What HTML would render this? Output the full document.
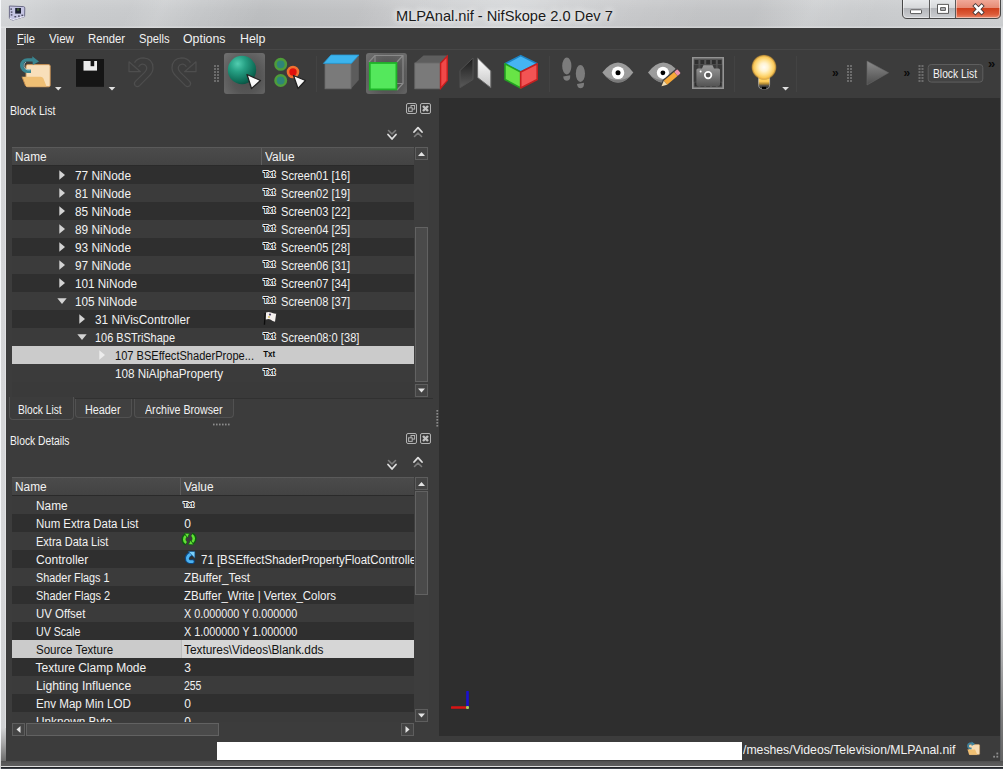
<!DOCTYPE html>
<html><head><meta charset="utf-8"><title>NifSkope</title>
<style>
*{box-sizing:border-box;margin:0;padding:0}
html,body{width:1003px;height:769px;overflow:hidden;background:#d4d6d8}
body{font-family:"Liberation Sans","DejaVu Sans",sans-serif;font-size:12px;color:#eee;position:relative}
.abs{position:absolute}
#frame{left:0;top:0;width:1003px;height:769px;background:linear-gradient(90deg,#d6d8da 0,#cbcdcf 60px,#c4c6c8 260px,#c9cacc 380px,#d2d4d6 500px,#cccdcf 640px,#c9cbcd 850px,#cfd1d3 1003px)}
#tshine{left:0;top:0;width:1003px;height:28px;background:linear-gradient(180deg,rgba(255,255,255,.10) 0,rgba(255,255,255,0) 10px,rgba(0,0,0,.02) 26px,rgba(255,255,255,.2) 27px,rgba(255,255,255,.2) 28px),linear-gradient(115deg,rgba(255,255,255,0) 120px,rgba(255,255,255,.12) 150px,rgba(255,255,255,0) 185px,rgba(0,0,0,.035) 240px,rgba(0,0,0,.035) 330px,rgba(255,255,255,0) 370px,rgba(255,255,255,.1) 480px,rgba(255,255,255,0) 520px,rgba(0,0,0,.04) 640px,rgba(0,0,0,.04) 690px,rgba(255,255,255,.1) 740px,rgba(255,255,255,0) 800px)}
#lb{left:0;top:28px;width:6px;height:741px;background:linear-gradient(180deg,#d2d3d5 0,#d6d7d9 520px,#d0d1d3 700px,#a8a8a8 715px,#6c6c6c 733px,#5a5a5a 741px)}
#lbw{left:0;top:0;width:1px;height:769px;background:linear-gradient(180deg,#f6f8fa 0,#f6f8fa 738px,#d0d0d0 769px)}
#lbh{left:5px;top:28px;width:1px;height:700px;background:rgba(255,255,255,.3)}
#rb{left:1000px;top:28px;width:3px;height:741px;background:linear-gradient(90deg,#5c5e60 0,#5c5e60 1px,#e2e4e6 1px,#dcdee0 3px)}
#rbd{left:1001px;top:570px;width:2px;height:199px;background:linear-gradient(180deg,rgba(100,100,100,0) 0,rgba(100,100,100,.45) 90px,rgba(95,95,95,.8) 150px,rgba(85,85,85,.9) 191px)}
#bb{left:1px;top:761px;width:1002px;height:8px;background:linear-gradient(180deg,#4e4e4e 0,#585858 2px,#5c5c5c 5px,#e4e4e4 5px,#d8d8d8 6px,#1c1c1c 6px,#2a2e34 7px,#50565e 8px)}
#title{left:0;top:6px;width:1003px;text-align:center;font-size:15px;color:#111}
#app{left:6px;top:28px;width:994px;height:733px;background:#3c3c3c}
.mi{position:absolute;top:32px;font-size:12px;color:#f2f2f2;white-space:nowrap}
#tbline{left:6px;top:49px;width:994px;height:1px;background:#474747}
#viewport{left:439px;top:98px;width:561px;height:638px;background:#2e2e2e}
.ptitle{position:absolute;left:10px;font-size:12px;color:#f0f0f0;white-space:nowrap}
.treebg{background:#3a3a3a}
.t{position:absolute;white-space:nowrap;transform-origin:0 0}
.hdr{position:absolute;height:19px;background:linear-gradient(#4b4b4b,#434343);border-top:1px solid #5a5a5a;border-bottom:1px solid #2a2a2a;font-size:12px;color:#f0f0f0}
.hdr span{position:absolute;top:2px;white-space:nowrap}
.row{position:absolute;height:18px}
.row.a{background:#2f2f2f}
.row.b{background:#3b3b3b}
.row.sel{background:#cbcbcb;color:#111}
.row span{position:absolute;top:2px}
.row .arr{position:absolute;top:4px}
.txt{position:absolute;font-style:normal;font-weight:bold;font-size:9px;line-height:9px;color:#111;letter-spacing:-0.5px;text-shadow:-1px 0 #eee,1px 0 #eee,0 -1px #eee,0 1px #eee}
.txt.ns{text-shadow:none}
.txt.sm{font-size:8px;line-height:8px}
.tab{position:absolute;border:1px solid #515151;border-top:none;border-radius:0 0 4px 4px;background:#3c3c3c}
.tab span{position:absolute;top:3px}
.sb{position:absolute;background:#3a3a3a}
.chk{border-radius:3px;background:radial-gradient(ellipse at 55% 60%,#4c4c4c 0,#565656 45%,#686868 80%,#727272 100%)}
.btn13{position:absolute;width:13px;height:13px;border:1px solid #666;background:#444}
</style></head><body>
<div id="frame" class="abs"></div>
<div id="tshine" class="abs"></div><div id="lb" class="abs"></div><div id="lbh" class="abs"></div><div id="rb" class="abs"></div><div id="rbd" class="abs"></div><div id="bb" class="abs"></div><div id="lbw" class="abs"></div>
<span class="t" id="t51" style="left:395.5px;top:5.50px;font-size:15px;line-height:19px;color:#1a1a1a;transform:scaleX(0.9751);text-shadow:0 0 6px #fff,0 0 10px #fff;">MLPAnal.nif - NifSkope 2.0 Dev 7</span>
<div id="app" class="abs"></div>
<span class="t" id="t45" style="left:17px;top:31.84px;font-size:12px;line-height:15px;color:#f2f2f2;transform:scaleX(0.9298);"><u>F</u>ile</span><span class="t" id="t46" style="left:49px;top:31.84px;font-size:12px;line-height:15px;color:#f2f2f2;transform:scaleX(0.9691);">View</span><span class="t" id="t47" style="left:88.3px;top:31.84px;font-size:12px;line-height:15px;color:#f2f2f2;transform:scaleX(0.9401);">Render</span><span class="t" id="t48" style="left:139px;top:31.84px;font-size:12px;line-height:15px;color:#f2f2f2;transform:scaleX(0.9331);">Spells</span><span class="t" id="t49" style="left:183px;top:31.84px;font-size:12px;line-height:15px;color:#f2f2f2;transform:scaleX(1.0276);">Options</span><span class="t" id="t50" style="left:240px;top:31.84px;font-size:12px;line-height:15px;color:#f2f2f2;transform:scaleX(1.0329);">Help</span>
<div id="tbline" class="abs"></div>

<div class="abs chk" style="left:224px;top:53px;width:41px;height:41px"></div>
<div class="abs chk" style="left:366px;top:53px;width:41px;height:41px"></div>
<svg class="abs" style="left:6px;top:50px" width="994" height="48" viewBox="6 50 994 48">
<defs>
<radialGradient id="gSph" cx="0.35" cy="0.28" r="0.8"><stop offset="0" stop-color="#52cdb0"/><stop offset="0.35" stop-color="#26a084"/><stop offset="0.8" stop-color="#0d6a55"/><stop offset="1" stop-color="#084a3c"/></radialGradient>
<linearGradient id="gDk" x1="0" y1="0" x2="0" y2="1"><stop offset="0" stop-color="#1c1c1c"/><stop offset="1" stop-color="#5a5a5a"/></linearGradient>
<linearGradient id="gWh" x1="0" y1="0" x2="0" y2="1"><stop offset="0" stop-color="#ffffff"/><stop offset="1" stop-color="#c4c4c4"/></linearGradient>
<linearGradient id="gPlay" x1="0" y1="0" x2="0" y2="1"><stop offset="0" stop-color="#8c8c8c"/><stop offset="1" stop-color="#4c4c4c"/></linearGradient>
<linearGradient id="gCam" x1="0" y1="0" x2="0" y2="1"><stop offset="0" stop-color="#9a9a9a"/><stop offset="1" stop-color="#555"/></linearGradient>
<radialGradient id="gGlow" cx="0.5" cy="0.5" r="0.5"><stop offset="0" stop-color="#fffcf6"/><stop offset="0.32" stop-color="#fff3d0"/><stop offset="0.58" stop-color="#ffe08c"/><stop offset="0.8" stop-color="#fac858"/><stop offset="0.9" stop-color="#e0a840" stop-opacity="0.8"/><stop offset="1" stop-color="#806020" stop-opacity="0"/></radialGradient>
<linearGradient id="gNeck" x1="0" y1="0" x2="0" y2="1"><stop offset="0" stop-color="#ffe080"/><stop offset="0.5" stop-color="#ffcc58"/><stop offset="0.66" stop-color="#b48c34"/><stop offset="0.8" stop-color="#484848"/><stop offset="1" stop-color="#2a2a2a"/></linearGradient>
</defs>

<g>
<rect x="26" y="64.6" width="24.2" height="22.2" rx="1.6" fill="#f8dfba" stroke="#c98e4e" stroke-width="0.9"/>
<path d="M22 76.8 L40.6 76.8 Q42.6 76.8 43.4 78.6 L46.6 86.6 L27.2 86.6 Q26 86.6 25.5 85.4 Z" fill="#efbf74"/>
<path d="M22 76.8 L25.6 86" stroke="#c98e4e" stroke-width="0.9"/>
<path d="M31 71.3 L27.4 71.3 A5.7 5.7 0 0 1 27.4 59.9 L33 59.9" fill="none" stroke="#3a8590" stroke-width="3.4"/>
<path d="M32.2 56.2 L39 61.6 L32.8 65 Z" fill="#3a8590"/>
<path d="M30.6 69.9 L27.6 69.9 A4.3 4.3 0 0 1 26 62" fill="none" stroke="#b8dce6" stroke-width="0.9" opacity="0.8"/>
</g>
<path d="M55 87 L61.6 87 L58.3 90.4 Z" fill="#e0e0e0"/>

<rect x="76" y="59" width="28" height="27.8" fill="#151515"/>
<rect x="83.5" y="61" width="13.5" height="9.6" fill="#ececec"/>
<rect x="90.6" y="61" width="3.6" height="5.2" fill="#151515"/>
<path d="M108.6 87 L115.3 87 L112 90.4 Z" fill="#e0e0e0"/>

<g fill="none" stroke="#4e4e4e" stroke-width="1.2" stroke-linejoin="round">
<path d="M134.5 62.6 Q137.5 57.8 143.5 57.8 Q153 58.4 153 68 Q153 72.2 149 76.2 L139.6 85.6 Q137.4 87.6 135.2 85.6 Q133.4 83.6 135.4 81.4 L144.6 72.4 Q147.6 69.4 146.4 66.6 Q145 63.8 142 64.2 Q139.8 64.6 138.6 66.8"/>
<path d="M129 61.8 L129 71.7 L140.4 71.7 Z"/>
</g>

<g fill="none" stroke="#4e4e4e" stroke-width="1.2" stroke-linejoin="round" transform="translate(325 0) scale(-1 1)">
<path d="M134.5 62.6 Q137.5 57.8 143.5 57.8 Q153 58.4 153 68 Q153 72.2 149 76.2 L139.6 85.6 Q137.4 87.6 135.2 85.6 Q133.4 83.6 135.4 81.4 L144.6 72.4 Q147.6 69.4 146.4 66.6 Q145 63.8 142 64.2 Q139.8 64.6 138.6 66.8"/>
<path d="M129 61.8 L129 71.7 L140.4 71.7 Z"/>
</g>

<g fill="#6c6c6c">
<rect x="214" y="65" width="2" height="2"/><rect x="217" y="65" width="2" height="2"/>
<rect x="214" y="68" width="2" height="2"/><rect x="217" y="68" width="2" height="2"/>
<rect x="214" y="71" width="2" height="2"/><rect x="217" y="71" width="2" height="2"/>
<rect x="214" y="74" width="2" height="2"/><rect x="217" y="74" width="2" height="2"/>
<rect x="214" y="77" width="2" height="2"/><rect x="217" y="77" width="2" height="2"/>
<rect x="214" y="80" width="2" height="2"/><rect x="217" y="80" width="2" height="2"/>
</g>

<circle cx="242" cy="70" r="14.2" fill="url(#gSph)"/>
<path d="M247 74.5 L260.5 80.5 L251.5 88.5 Z" fill="#fafafa" stroke="#222" stroke-width="1.3" stroke-linejoin="round"/>

<circle cx="280.7" cy="64.3" r="5.2" fill="#2f8478" stroke="#4e9c3a" stroke-width="2.6"/>
<circle cx="280.7" cy="80.5" r="5.2" fill="#2f8478" stroke="#4e9c3a" stroke-width="2.6"/>
<circle cx="293" cy="72" r="5" fill="#e0100c" stroke="#f07030" stroke-width="2.6"/>
<path d="M293.5 75.5 L305.5 80.5 L298 88.5 Z" fill="#fafafa" stroke="#222" stroke-width="1.3" stroke-linejoin="round"/>
<rect x="316" y="56" width="1" height="36" fill="#434343"/>

<path d="M351 63.7 L358.8 55.2 L358.8 80 L351 88.8 Z" fill="#5c5c5c"/>
<rect x="325" y="63.7" width="26" height="25.1" fill="#7a7a7a" stroke="#6a6a6a" stroke-width="0.8"/>
<path d="M323.4 63.4 L331 55 L359 55 L351.4 63.4 Z" fill="#3cb4ee" stroke="#2a98d0" stroke-width="0.8"/>

<path d="M375 62 L375 55.5 L403 55.5 L403 83.5 L397 83.5 M403 55.5 L397 62 M403 83.5 L397 90" fill="none" stroke="#8a8a8a" stroke-width="1.2"/>
<path d="M375 55.5 L369 62" stroke="#8a8a8a" stroke-width="1.2"/>
<rect x="369.8" y="63" width="26.6" height="26.4" fill="#54e85c" stroke="#1eb428" stroke-width="1.8"/>

<path d="M414.8 63 L423.5 55.6 L447.5 55.6 L440 63 Z" fill="#5e5e5e"/>
<rect x="414.8" y="63" width="25.2" height="25.8" fill="#7a7a7a" stroke="#6a6a6a" stroke-width="0.8"/>
<path d="M440.6 63.2 L447.2 56.2 L447.2 80.6 L440.6 88.4 Z" fill="#f24848" stroke="#c81e1e" stroke-width="1.4"/>

<path d="M460 70.5 L473 58 L473 79.5 L460 87.8 Z" fill="url(#gDk)" stroke="#505050" stroke-width="1"/>
<path d="M477.6 58 L490.8 71 L490.8 87.8 L477.6 77.5 Z" fill="url(#gWh)" stroke="#6a6a6a" stroke-width="1"/>

<path d="M520.7 55.6 L537.2 63.8 L520.7 72 L505 63.8 Z" fill="#46b4f2" stroke="#1c84c4" stroke-width="1.6" stroke-linejoin="round"/>
<path d="M505 63.8 L520.7 72 L520.7 88 L505 79.5 Z" fill="#68e446" stroke="#22a222" stroke-width="1.6" stroke-linejoin="round"/>
<path d="M537.2 63.8 L520.7 72 L520.7 88 L537.2 79.5 Z" fill="#f25454" stroke="#c42020" stroke-width="1.6" stroke-linejoin="round"/>
<rect x="549" y="56" width="1" height="36" fill="#434343"/>

<g fill="#7c7c7c">
<ellipse cx="566.8" cy="66" rx="4.6" ry="8.4"/>
<path d="M563.2 76.5 L570.2 75.3 Q570.6 80.5 567 80.8 Q563.6 80.8 563.2 76.5 Z"/>
<ellipse cx="580.4" cy="73.5" rx="4.6" ry="8.4"/>
<path d="M577 84 L584 82.8 Q584.4 88 580.8 88.2 Q577.4 88.2 577 84 Z"/>
</g>

<path d="M602.3 72.6 Q610 62.6 618 62.6 Q626 62.6 633.3 72.6 Q626 82.6 618 82.6 Q610 82.6 602.3 72.6 Z" fill="#9c9c9c"/>
<path d="M605 75.5 Q611 82.6 618 82.6 Q625 82.6 631 75.5 Q625 80 618 80 Q611 80 605 75.5 Z" fill="#7a7a7a"/>
<circle cx="618" cy="72.7" r="6.3" fill="#fff"/><circle cx="618" cy="72.7" r="2.5" fill="#000"/>

<path d="M648 72.6 Q655.6 62.6 663.4 62.6 Q671.4 62.6 678.7 72.6 Q671.4 82.6 663.4 82.6 Q655.6 82.6 648 72.6 Z" fill="#9c9c9c"/>
<path d="M650.5 75.5 Q656.5 82.6 663.4 82.6 Q670 82.6 676 75.5 Q670 80 663.4 80 Q656.5 80 650.5 75.5 Z" fill="#7e7e7e"/>
<circle cx="662.9" cy="72.8" r="6.1" fill="#fff"/><circle cx="662.9" cy="72.8" r="2.4" fill="#000"/>
<g transform="translate(661.5 86.2) rotate(49.4)">
<path d="M-3.9 -24 L3.9 -24 L3.9 -5 L0 1.6 L-3.9 -5 Z" fill="#3c3c3c"/>
<rect x="-2.6" y="-23" width="5.2" height="4.2" rx="0.8" fill="#f090a8"/>
<rect x="-2.6" y="-18.8" width="5.2" height="13.6" fill="#f6a838"/>
<path d="M-2.6 -5.2 L2.6 -5.2 L0 0 Z" fill="#f4dcae"/>
</g>

<rect x="692" y="57" width="32" height="32" fill="#3a3a3a"/>
<g fill="#4e4e4e"><rect x="698.4" y="64" width="2" height="18.4"/><rect x="704.2" y="64" width="2" height="18.4"/><rect x="710" y="64" width="2" height="18.4"/><rect x="715.8" y="64" width="2" height="18.4"/></g>
<rect x="693" y="59" width="30" height="5.6" fill="#565656"/><rect x="693" y="81.8" width="30" height="5.6" fill="#565656"/>
<g fill="#2e2e2e"><rect x="694.6" y="60" width="3.8" height="4"/><rect x="694.6" y="82.4" width="3.8" height="4"/><rect x="700.4" y="60" width="3.8" height="4"/><rect x="700.4" y="82.4" width="3.8" height="4"/><rect x="706.2" y="60" width="3.8" height="4"/><rect x="706.2" y="82.4" width="3.8" height="4"/><rect x="712" y="60" width="3.8" height="4"/><rect x="712" y="82.4" width="3.8" height="4"/><rect x="717.8" y="60" width="3.8" height="4"/><rect x="717.8" y="82.4" width="3.8" height="4"/></g>
<rect x="692.8" y="57.8" width="30.4" height="30.4" fill="none" stroke="#949494" stroke-width="1.6"/>
<path d="M696.4 70 Q696.4 68.4 698 68.4 L702 68.4 L703.4 65.2 L712.6 65.2 L714 68.4 L718.4 68.4 Q720 68.4 720 70 L720 84.4 Q720 86 718.4 86 L698 86 Q696.4 86 696.4 84.4 Z" fill="url(#gCam)"/>
<circle cx="708.1" cy="75.1" r="3.3" fill="#5a5a5a" stroke="#fff" stroke-width="1.7"/>
<circle cx="700.6" cy="71.6" r="1" fill="#fff"/>
<rect x="734" y="56" width="1" height="36" fill="#434343"/>

<path d="M758.6 74 L758.6 84.6 Q758.6 88.8 762 88.8 L766.2 88.8 Q769.6 88.8 769.6 84.6 L769.6 74 Z" fill="url(#gNeck)" stroke="#d8d8d8" stroke-width="0.7" stroke-opacity="0.75"/>
<circle cx="764" cy="67.2" r="13" fill="url(#gGlow)"/>
<rect x="762" y="86.8" width="4.2" height="2.2" fill="#000"/>
<path d="M782.2 87 L789 87 L785.6 90.4 Z" fill="#e0e0e0"/>
<rect x="796" y="56" width="1" height="36" fill="#434343"/>

<text x="832" y="77" font-size="12" font-weight="bold" fill="#0a0a0a" font-family="Liberation Sans, sans-serif">»</text>
<g fill="#6c6c6c" transform="translate(633 0)">
<rect x="214" y="65" width="2" height="2"/><rect x="217" y="65" width="2" height="2"/>
<rect x="214" y="68" width="2" height="2"/><rect x="217" y="68" width="2" height="2"/>
<rect x="214" y="71" width="2" height="2"/><rect x="217" y="71" width="2" height="2"/>
<rect x="214" y="74" width="2" height="2"/><rect x="217" y="74" width="2" height="2"/>
<rect x="214" y="77" width="2" height="2"/><rect x="217" y="77" width="2" height="2"/>
<rect x="214" y="80" width="2" height="2"/><rect x="217" y="80" width="2" height="2"/>
</g>
<path d="M867 61 L888.6 72.8 L867 85 Z" fill="url(#gPlay)" stroke="#666" stroke-width="0.6"/>
<text x="903.6" y="77" font-size="12" font-weight="bold" fill="#0a0a0a" font-family="Liberation Sans, sans-serif">»</text>
<g fill="#6c6c6c" transform="translate(704.5 0)">
<rect x="214" y="65" width="2" height="2"/><rect x="217" y="65" width="2" height="2"/>
<rect x="214" y="68" width="2" height="2"/><rect x="217" y="68" width="2" height="2"/>
<rect x="214" y="71" width="2" height="2"/><rect x="217" y="71" width="2" height="2"/>
<rect x="214" y="74" width="2" height="2"/><rect x="217" y="74" width="2" height="2"/>
<rect x="214" y="77" width="2" height="2"/><rect x="217" y="77" width="2" height="2"/>
<rect x="214" y="80" width="2" height="2"/><rect x="217" y="80" width="2" height="2"/>
</g>
<rect x="928.2" y="64.5" width="54.6" height="17.6" rx="3" fill="#434343" stroke="#5e5e5e" stroke-width="1"/>
<text x="988" y="68" font-size="13" font-weight="bold" fill="#0a0a0a" font-family="Liberation Sans, sans-serif">»</text>
</svg>


<div id="viewport" class="abs"></div>


<div class="abs treebg" style="left:12px;top:147px;width:416px;height:251px"></div>
<div class="hdr" style="left:12px;top:147px;width:402px"><div class="abs" style="left:249px;top:0;width:1px;height:17px;background:#5e5e5e"></div></div>
<div class="row a" style="left:12px;top:166px;width:402px"></div>
<svg class="abs" style="left:59px;top:170px" width="7" height="10" viewBox="0 0 7 10"><path d="M0.3 0.3 L6 5 L0.3 9.7 Z" fill="#d4d4d4"/></svg>
<span class="t" id="t0" style="left:75.3px;top:169.34px;font-size:12px;line-height:15px;color:#f2f2f2;transform:scaleX(0.9876);">77 NiNode</span>
<svg class="abs" style="left:261.8px;top:169px" width="15" height="11" viewBox="0 0 15 11"><text x="1.2" y="8.2" font-family="Liberation Sans, sans-serif" font-weight="bold" font-size="9" textLength="12" lengthAdjust="spacingAndGlyphs" fill="#0a0a0a" stroke="#ececec" stroke-width="2" stroke-linejoin="round" paint-order="stroke">Txt</text></svg>
<span class="t" id="t1" style="left:281.3px;top:169.34px;font-size:12px;line-height:15px;color:#f2f2f2;transform:scaleX(0.9235);">Screen01 [16]</span>
<div class="row b" style="left:12px;top:184px;width:402px"></div>
<svg class="abs" style="left:59px;top:188px" width="7" height="10" viewBox="0 0 7 10"><path d="M0.3 0.3 L6 5 L0.3 9.7 Z" fill="#d4d4d4"/></svg>
<span class="t" id="t2" style="left:75.3px;top:187.34px;font-size:12px;line-height:15px;color:#f2f2f2;transform:scaleX(0.9876);">81 NiNode</span>
<svg class="abs" style="left:261.8px;top:187px" width="15" height="11" viewBox="0 0 15 11"><text x="1.2" y="8.2" font-family="Liberation Sans, sans-serif" font-weight="bold" font-size="9" textLength="12" lengthAdjust="spacingAndGlyphs" fill="#0a0a0a" stroke="#ececec" stroke-width="2" stroke-linejoin="round" paint-order="stroke">Txt</text></svg>
<span class="t" id="t3" style="left:281.3px;top:187.34px;font-size:12px;line-height:15px;color:#f2f2f2;transform:scaleX(0.9235);">Screen02 [19]</span>
<div class="row a" style="left:12px;top:202px;width:402px"></div>
<svg class="abs" style="left:59px;top:206px" width="7" height="10" viewBox="0 0 7 10"><path d="M0.3 0.3 L6 5 L0.3 9.7 Z" fill="#d4d4d4"/></svg>
<span class="t" id="t4" style="left:75.3px;top:205.34px;font-size:12px;line-height:15px;color:#f2f2f2;transform:scaleX(0.9876);">85 NiNode</span>
<svg class="abs" style="left:261.8px;top:205px" width="15" height="11" viewBox="0 0 15 11"><text x="1.2" y="8.2" font-family="Liberation Sans, sans-serif" font-weight="bold" font-size="9" textLength="12" lengthAdjust="spacingAndGlyphs" fill="#0a0a0a" stroke="#ececec" stroke-width="2" stroke-linejoin="round" paint-order="stroke">Txt</text></svg>
<span class="t" id="t5" style="left:281.3px;top:205.34px;font-size:12px;line-height:15px;color:#f2f2f2;transform:scaleX(0.9235);">Screen03 [22]</span>
<div class="row b" style="left:12px;top:220px;width:402px"></div>
<svg class="abs" style="left:59px;top:224px" width="7" height="10" viewBox="0 0 7 10"><path d="M0.3 0.3 L6 5 L0.3 9.7 Z" fill="#d4d4d4"/></svg>
<span class="t" id="t6" style="left:75.3px;top:223.34px;font-size:12px;line-height:15px;color:#f2f2f2;transform:scaleX(0.9876);">89 NiNode</span>
<svg class="abs" style="left:261.8px;top:223px" width="15" height="11" viewBox="0 0 15 11"><text x="1.2" y="8.2" font-family="Liberation Sans, sans-serif" font-weight="bold" font-size="9" textLength="12" lengthAdjust="spacingAndGlyphs" fill="#0a0a0a" stroke="#ececec" stroke-width="2" stroke-linejoin="round" paint-order="stroke">Txt</text></svg>
<span class="t" id="t7" style="left:281.3px;top:223.34px;font-size:12px;line-height:15px;color:#f2f2f2;transform:scaleX(0.9235);">Screen04 [25]</span>
<div class="row a" style="left:12px;top:238px;width:402px"></div>
<svg class="abs" style="left:59px;top:242px" width="7" height="10" viewBox="0 0 7 10"><path d="M0.3 0.3 L6 5 L0.3 9.7 Z" fill="#d4d4d4"/></svg>
<span class="t" id="t8" style="left:75.3px;top:241.34px;font-size:12px;line-height:15px;color:#f2f2f2;transform:scaleX(0.9876);">93 NiNode</span>
<svg class="abs" style="left:261.8px;top:241px" width="15" height="11" viewBox="0 0 15 11"><text x="1.2" y="8.2" font-family="Liberation Sans, sans-serif" font-weight="bold" font-size="9" textLength="12" lengthAdjust="spacingAndGlyphs" fill="#0a0a0a" stroke="#ececec" stroke-width="2" stroke-linejoin="round" paint-order="stroke">Txt</text></svg>
<span class="t" id="t9" style="left:281.3px;top:241.34px;font-size:12px;line-height:15px;color:#f2f2f2;transform:scaleX(0.9235);">Screen05 [28]</span>
<div class="row b" style="left:12px;top:256px;width:402px"></div>
<svg class="abs" style="left:59px;top:260px" width="7" height="10" viewBox="0 0 7 10"><path d="M0.3 0.3 L6 5 L0.3 9.7 Z" fill="#d4d4d4"/></svg>
<span class="t" id="t10" style="left:75.3px;top:259.34px;font-size:12px;line-height:15px;color:#f2f2f2;transform:scaleX(0.9876);">97 NiNode</span>
<svg class="abs" style="left:261.8px;top:259px" width="15" height="11" viewBox="0 0 15 11"><text x="1.2" y="8.2" font-family="Liberation Sans, sans-serif" font-weight="bold" font-size="9" textLength="12" lengthAdjust="spacingAndGlyphs" fill="#0a0a0a" stroke="#ececec" stroke-width="2" stroke-linejoin="round" paint-order="stroke">Txt</text></svg>
<span class="t" id="t11" style="left:281.3px;top:259.34px;font-size:12px;line-height:15px;color:#f2f2f2;transform:scaleX(0.9235);">Screen06 [31]</span>
<div class="row a" style="left:12px;top:274px;width:402px"></div>
<svg class="abs" style="left:59px;top:278px" width="7" height="10" viewBox="0 0 7 10"><path d="M0.3 0.3 L6 5 L0.3 9.7 Z" fill="#d4d4d4"/></svg>
<span class="t" id="t12" style="left:75.3px;top:277.34px;font-size:12px;line-height:15px;color:#f2f2f2;transform:scaleX(0.9783);">101 NiNode</span>
<svg class="abs" style="left:261.8px;top:277px" width="15" height="11" viewBox="0 0 15 11"><text x="1.2" y="8.2" font-family="Liberation Sans, sans-serif" font-weight="bold" font-size="9" textLength="12" lengthAdjust="spacingAndGlyphs" fill="#0a0a0a" stroke="#ececec" stroke-width="2" stroke-linejoin="round" paint-order="stroke">Txt</text></svg>
<span class="t" id="t13" style="left:281.3px;top:277.34px;font-size:12px;line-height:15px;color:#f2f2f2;transform:scaleX(0.9235);">Screen07 [34]</span>
<div class="row b" style="left:12px;top:292px;width:402px"></div>
<svg class="abs" style="left:57px;top:298px" width="10" height="7" viewBox="0 0 10 7"><path d="M0.3 0.3 L9.7 0.3 L5 6 Z" fill="#d4d4d4"/></svg>
<span class="t" id="t14" style="left:75.3px;top:295.34px;font-size:12px;line-height:15px;color:#f2f2f2;transform:scaleX(0.9783);">105 NiNode</span>
<svg class="abs" style="left:261.8px;top:295px" width="15" height="11" viewBox="0 0 15 11"><text x="1.2" y="8.2" font-family="Liberation Sans, sans-serif" font-weight="bold" font-size="9" textLength="12" lengthAdjust="spacingAndGlyphs" fill="#0a0a0a" stroke="#ececec" stroke-width="2" stroke-linejoin="round" paint-order="stroke">Txt</text></svg>
<span class="t" id="t15" style="left:281.3px;top:295.34px;font-size:12px;line-height:15px;color:#f2f2f2;transform:scaleX(0.9235);">Screen08 [37]</span>
<div class="row a" style="left:12px;top:310px;width:402px"></div>
<svg class="abs" style="left:79px;top:314px" width="7" height="10" viewBox="0 0 7 10"><path d="M0.3 0.3 L6 5 L0.3 9.7 Z" fill="#d4d4d4"/></svg>
<span class="t" id="t16" style="left:95.4px;top:313.34px;font-size:12px;line-height:15px;color:#f2f2f2;transform:scaleX(0.9845);">31 NiVisController</span>
<svg class="abs" style="left:262px;top:310px" width="18" height="17" viewBox="262 310 18 17"><path d="M265.3 313 L264.4 324.8" stroke="#0c0c0c" stroke-width="1.3"/><path d="M266 312.6 Q268.5 311.4 271 312.6 Q273.5 313.8 276.2 313.6 L275 321.8 Q272.5 321.4 270.8 319.8 Q268.6 318.2 265.8 319.6 Z" fill="#f4f0ee"/><circle cx="270" cy="314.6" r="1.1" fill="#54486a"/><circle cx="269" cy="317" r="1" fill="#d8c060"/></svg>

<div class="row b" style="left:12px;top:328px;width:402px"></div>
<svg class="abs" style="left:77px;top:334px" width="10" height="7" viewBox="0 0 10 7"><path d="M0.3 0.3 L9.7 0.3 L5 6 Z" fill="#d4d4d4"/></svg>
<span class="t" id="t17" style="left:95.4px;top:331.34px;font-size:12px;line-height:15px;color:#f2f2f2;transform:scaleX(0.9131);">106 BSTriShape</span>
<svg class="abs" style="left:261.8px;top:331px" width="15" height="11" viewBox="0 0 15 11"><text x="1.2" y="8.2" font-family="Liberation Sans, sans-serif" font-weight="bold" font-size="9" textLength="12" lengthAdjust="spacingAndGlyphs" fill="#0a0a0a" stroke="#ececec" stroke-width="2" stroke-linejoin="round" paint-order="stroke">Txt</text></svg>
<span class="t" id="t18" style="left:281.3px;top:331.34px;font-size:12px;line-height:15px;color:#f2f2f2;transform:scaleX(0.9252);">Screen08:0 [38]</span>
<div class="row sel" style="left:12px;top:346px;width:402px"></div>
<svg class="abs" style="left:99px;top:350px" width="7" height="10" viewBox="0 0 7 10"><path d="M0.3 0.3 L6 5 L0.3 9.7 Z" fill="#ececec"/></svg>
<span class="t" id="t19" style="left:115.4px;top:349.34px;font-size:12px;line-height:15px;color:#111;transform:scaleX(0.9233);">107 BSEffectShaderPrope...</span>
<svg class="abs" style="left:261.8px;top:349px" width="15" height="11" viewBox="0 0 15 11"><text x="1.2" y="8.2" font-family="Liberation Sans, sans-serif" font-weight="bold" font-size="9" textLength="12" lengthAdjust="spacingAndGlyphs" fill="#0a0a0a">Txt</text></svg>
<div class="row b" style="left:12px;top:364px;width:402px"></div>
<span class="t" id="t20" style="left:115.4px;top:367.34px;font-size:12px;line-height:15px;color:#f2f2f2;transform:scaleX(0.9753);">108 NiAlphaProperty</span>
<svg class="abs" style="left:261.8px;top:367px" width="15" height="11" viewBox="0 0 15 11"><text x="1.2" y="8.2" font-family="Liberation Sans, sans-serif" font-weight="bold" font-size="9" textLength="12" lengthAdjust="spacingAndGlyphs" fill="#0a0a0a" stroke="#ececec" stroke-width="2" stroke-linejoin="round" paint-order="stroke">Txt</text></svg>

<div class="tab" style="left:9px;top:397px;width:65px;height:23px"></div>
<div class="tab" style="left:75px;top:398px;width:57px;height:20px;background:#404040"></div>
<div class="tab" style="left:134px;top:398px;width:100px;height:20px;background:#404040"></div>


<div class="abs treebg" style="left:12px;top:477px;width:416px;height:259px"></div>
<div class="hdr" style="left:12px;top:477px;width:402px"><div class="abs" style="left:168px;top:0;width:1px;height:17px;background:#5e5e5e"></div></div>
<div class="row b" style="left:12px;top:496px;width:402px"></div>
<span class="t" id="t21" style="left:35.5px;top:499.34px;font-size:12px;line-height:15px;color:#f2f2f2;transform:scaleX(0.9901);">Name</span>
<svg class="abs" style="left:181.8px;top:500px" width="14" height="9" viewBox="0 0 14 9"><text x="1.2" y="7.0" font-family="Liberation Sans, sans-serif" font-weight="bold" font-size="7.4" textLength="10.6" lengthAdjust="spacingAndGlyphs" fill="#0a0a0a" stroke="#ececec" stroke-width="2" stroke-linejoin="round" paint-order="stroke">Txt</text></svg>
<div class="row a" style="left:12px;top:514px;width:402px"></div>
<span class="t" id="t22" style="left:35.5px;top:517.34px;font-size:12px;line-height:15px;color:#f2f2f2;transform:scaleX(0.9546);">Num Extra Data List</span>
<span class="t" id="t23" style="left:184.2px;top:517.34px;font-size:12px;line-height:15px;color:#f2f2f2;">0</span>
<div class="row b" style="left:12px;top:532px;width:402px"></div>
<span class="t" id="t24" style="left:35.5px;top:535.34px;font-size:12px;line-height:15px;color:#f2f2f2;transform:scaleX(0.9174);">Extra Data List</span>
<svg class="abs" style="left:181px;top:531px" width="17" height="16" viewBox="181 531 17 16"><g fill="none" stroke-linecap="butt"><path d="M186.2 543.6 A4.6 4.6 0 0 1 185.6 535.6" stroke="#0c5c10" stroke-width="4.2"/><path d="M191.8 534.4 A4.6 4.6 0 0 1 192.4 542.4" stroke="#0c5c10" stroke-width="4.2"/><path d="M186.2 543 A4.4 4.4 0 0 1 185.8 536" stroke="#62e234" stroke-width="2.6"/><path d="M191.8 535 A4.4 4.4 0 0 1 192.2 542" stroke="#62e234" stroke-width="2.6"/></g><path d="M184.4 533.2 L189.6 533.4 L187.4 538 Z" fill="#62e234" stroke="#0c5c10" stroke-width="0.7"/><path d="M193.6 544.8 L188.4 544.6 L190.6 540 Z" fill="#62e234" stroke="#0c5c10" stroke-width="0.7"/></svg>

<div class="row a" style="left:12px;top:550px;width:402px"></div>
<span class="t" id="t25" style="left:35.5px;top:553.34px;font-size:12px;line-height:15px;color:#f2f2f2;transform:scaleX(1.0052);">Controller</span>
<svg class="abs" style="left:183px;top:550px" width="14" height="15" viewBox="183 550 14 15"><path d="M192.6 561.6 Q186.8 562.4 187 558.2 Q187.2 555.4 191 553.6" fill="none" stroke="#0c4a86" stroke-width="4.6" stroke-linecap="round"/><path d="M192.4 561.6 Q187.2 562.2 187.4 558.2 Q187.6 555.8 191 553.8" fill="none" stroke="#4cb2f0" stroke-width="2.8" stroke-linecap="round"/><path d="M188.2 551.4 L194.9 551.4 L194.9 558.2 Z" fill="#7ad0fc" stroke="#0c4a86" stroke-width="0.6"/></svg>

<div class="abs" style="left:195px;top:550px;width:219px;height:18px;overflow:hidden">
<span class="t" id="t26" style="left:5.7px;top:3.34px;font-size:12px;line-height:15px;color:#f2f2f2;transform:scaleX(0.9553);">71 [BSEffectShaderPropertyFloatController]</span>
</div>
<div class="row b" style="left:12px;top:568px;width:402px"></div>
<span class="t" id="t27" style="left:35.5px;top:571.34px;font-size:12px;line-height:15px;color:#f2f2f2;transform:scaleX(0.9043);">Shader Flags 1</span>
<span class="t" id="t28" style="left:184.2px;top:571.34px;font-size:12px;line-height:15px;color:#f2f2f2;transform:scaleX(0.9733);">ZBuffer_Test</span>
<div class="row a" style="left:12px;top:586px;width:402px"></div>
<span class="t" id="t29" style="left:35.5px;top:589.34px;font-size:12px;line-height:15px;color:#f2f2f2;transform:scaleX(0.9117);">Shader Flags 2</span>
<span class="t" id="t30" style="left:184.2px;top:589.34px;font-size:12px;line-height:15px;color:#f2f2f2;transform:scaleX(0.9575);">ZBuffer_Write | Vertex_Colors</span>
<div class="row b" style="left:12px;top:604px;width:402px"></div>
<span class="t" id="t31" style="left:35.5px;top:607.34px;font-size:12px;line-height:15px;color:#f2f2f2;transform:scaleX(0.9518);">UV Offset</span>
<span class="t" id="t32" style="left:184.2px;top:607.34px;font-size:12px;line-height:15px;color:#f2f2f2;transform:scaleX(0.9014);">X 0.000000 Y 0.000000</span>
<div class="row a" style="left:12px;top:622px;width:402px"></div>
<span class="t" id="t33" style="left:35.5px;top:625.34px;font-size:12px;line-height:15px;color:#f2f2f2;transform:scaleX(0.8854);">UV Scale</span>
<span class="t" id="t34" style="left:184.2px;top:625.34px;font-size:12px;line-height:15px;color:#f2f2f2;transform:scaleX(0.9014);">X 1.000000 Y 1.000000</span>
<div class="row sel" style="left:12px;top:640px;width:402px"></div>
<div class="abs" style="left:181px;top:640px;width:233px;height:18px;background:#d6d6d6;border-left:1px solid #bcbcbc"></div>
<span class="t" id="t35" style="left:35.5px;top:643.34px;font-size:12px;line-height:15px;color:#111;transform:scaleX(0.9590);">Source Texture</span>
<span class="t" id="t36" style="left:184.2px;top:643.34px;font-size:12px;line-height:15px;color:#111;transform:scaleX(0.9879);">Textures\Videos\Blank.dds</span>
<div class="row a" style="left:12px;top:658px;width:402px"></div>
<span class="t" id="t37" style="left:35.5px;top:661.34px;font-size:12px;line-height:15px;color:#f2f2f2;">Texture Clamp Mode</span>
<span class="t" id="t38" style="left:184.2px;top:661.34px;font-size:12px;line-height:15px;color:#f2f2f2;">3</span>
<div class="row b" style="left:12px;top:676px;width:402px"></div>
<span class="t" id="t39" style="left:35.5px;top:679.34px;font-size:12px;line-height:15px;color:#f2f2f2;transform:scaleX(1.0119);">Lighting Influence</span>
<span class="t" id="t40" style="left:184.2px;top:679.34px;font-size:12px;line-height:15px;color:#f2f2f2;transform:scaleX(0.8686);">255</span>
<div class="row a" style="left:12px;top:694px;width:402px"></div>
<span class="t" id="t41" style="left:35.5px;top:697.34px;font-size:12px;line-height:15px;color:#f2f2f2;transform:scaleX(0.9669);">Env Map Min LOD</span>
<span class="t" id="t42" style="left:184.2px;top:697.34px;font-size:12px;line-height:15px;color:#f2f2f2;">0</span>
<div class="row b" style="left:12px;top:712px;width:402px"></div>
<span class="t" id="t43" style="left:35.5px;top:715.34px;font-size:12px;line-height:15px;color:#f2f2f2;transform:scaleX(0.9848);">Unknown Byte</span>
<span class="t" id="t44" style="left:184.2px;top:715.34px;font-size:12px;line-height:15px;color:#f2f2f2;">0</span>


<svg class="abs" style="left:414px;top:147px" width="15" height="252" viewBox="414 147 15 252">
<rect x="414" y="147" width="15" height="252" fill="#3d3d3d"/>
<rect x="415.5" y="147.5" width="12" height="12" fill="#444" stroke="#5e5e5e"/>
<path d="M418 156 L425 156 L421.5 152 Z" fill="#e4e4e4"/>
<rect x="415.5" y="227.5" width="12" height="154" fill="#4a4a4a" stroke="#626262"/>
<rect x="415.5" y="384.5" width="12" height="12" fill="#444" stroke="#5e5e5e"/>
<path d="M418 388.5 L425 388.5 L421.5 392.5 Z" fill="#e4e4e4"/>
</svg>
<svg class="abs" style="left:414px;top:477px" width="15" height="246" viewBox="414 477 15 246">
<rect x="414" y="477" width="15" height="246" fill="#3d3d3d"/>
<rect x="415.5" y="477.5" width="12" height="12" fill="#444" stroke="#5e5e5e"/>
<path d="M418 486 L425 486 L421.5 482 Z" fill="#e4e4e4"/>
<rect x="415.5" y="491.5" width="12" height="103" fill="#4a4a4a" stroke="#626262"/>
<rect x="415.5" y="709.5" width="12" height="12" fill="#444" stroke="#5e5e5e"/>
<path d="M418 713.5 L425 713.5 L421.5 717.5 Z" fill="#e4e4e4"/>
</svg>

<svg class="abs" style="left:12px;top:722px" width="417" height="14" viewBox="12 722 417 14">
<rect x="12" y="722" width="417" height="14" fill="#3c3c3c"/>
<rect x="12.5" y="723.5" width="12" height="12" fill="#444" stroke="#5e5e5e"/>
<path d="M20.5 726 L20.5 733 L16.5 729.5 Z" fill="#e4e4e4"/>
<rect x="26.5" y="723.5" width="192" height="12" fill="#4a4a4a" stroke="#626262"/>
<rect x="401.5" y="723.5" width="12" height="12" fill="#444" stroke="#5e5e5e"/>
<path d="M405.5 726 L405.5 733 L409.5 729.5 Z" fill="#e4e4e4"/>
</svg>

<svg class="abs" style="left:380px;top:100px" width="56" height="44" viewBox="380 100 56 44">
<g fill="none" stroke="#b2b2b2" stroke-width="1">
<rect x="406.5" y="103.5" width="10" height="10" rx="1.5"/>
<rect x="411" y="105.5" width="3.6" height="3.6"/><rect x="408.6" y="107.8" width="3.6" height="3.6" fill="#3c3c3c"/>
<rect x="420.5" y="103.5" width="10" height="10" rx="1.5"/>
<path d="M423 106 L428 111 M428 106 L423 111" stroke-width="2.4" stroke="#c0c0c0"/>
</g>
<g fill="none" stroke-linecap="round" stroke-linejoin="round">
<path d="M388.5 130.5 L392 134 L395.5 130.5" stroke="#7c7c7c" stroke-width="1.6"/>
<path d="M388 134.5 L392 139 L396 134.5" stroke="#dedede" stroke-width="1.8"/>
<path d="M414 132 L418 127.6 L422 132" stroke="#dedede" stroke-width="1.8"/>
<path d="M414.5 136.5 L418 133 L421.5 136.5" stroke="#7c7c7c" stroke-width="1.6"/>
</g>
</svg>
<svg class="abs" style="left:380px;top:430px" width="56" height="44" viewBox="380 100 56 44">
<g fill="none" stroke="#b2b2b2" stroke-width="1">
<rect x="406.5" y="103.5" width="10" height="10" rx="1.5"/>
<rect x="411" y="105.5" width="3.6" height="3.6"/><rect x="408.6" y="107.8" width="3.6" height="3.6" fill="#3c3c3c"/>
<rect x="420.5" y="103.5" width="10" height="10" rx="1.5"/>
<path d="M423 106 L428 111 M428 106 L423 111" stroke-width="2.4" stroke="#c0c0c0"/>
</g><g fill="none" stroke-linecap="round" stroke-linejoin="round">
<path d="M388.5 130.5 L392 134 L395.5 130.5" stroke="#7c7c7c" stroke-width="1.6"/>
<path d="M388 134.5 L392 139 L396 134.5" stroke="#dedede" stroke-width="1.8"/>
<path d="M414 132 L418 127.6 L422 132" stroke="#dedede" stroke-width="1.8"/>
<path d="M414.5 136.5 L418 133 L421.5 136.5" stroke="#7c7c7c" stroke-width="1.6"/>
</g>
</svg>

<svg class="abs" style="left:212px;top:423px" width="20" height="3" viewBox="0 0 20 3"><g fill="#8c8c8c"><rect x="1" y="0.6" width="1.6" height="1.8"/><rect x="4" y="0.6" width="1.6" height="1.8"/><rect x="7" y="0.6" width="1.6" height="1.8"/><rect x="10" y="0.6" width="1.6" height="1.8"/><rect x="13" y="0.6" width="1.6" height="1.8"/><rect x="16" y="0.6" width="1.6" height="1.8"/></g></svg>
<svg class="abs" style="left:436px;top:409px" width="3" height="20" viewBox="0 0 3 20"><g fill="#8c8c8c"><rect y="1" x="0.4" width="1.8" height="1.6"/><rect y="4" x="0.4" width="1.8" height="1.6"/><rect y="7" x="0.4" width="1.8" height="1.6"/><rect y="10" x="0.4" width="1.8" height="1.6"/><rect y="13" x="0.4" width="1.8" height="1.6"/><rect y="16" x="0.4" width="1.8" height="1.6"/></g></svg>

<div class="abs" style="left:75px;top:398px;width:358px;height:1px;background:#313131"></div>

<svg class="abs" style="left:448px;top:688px" width="26" height="24" viewBox="448 688 26 24">
<rect x="451" y="706.2" width="15.4" height="2.6" rx="0.6" fill="#d81414"/>
<rect x="466.2" y="691" width="2.6" height="15.4" rx="0.6" fill="#1a10d0"/>
<rect x="466" y="706" width="3" height="3" rx="1" fill="#a8c860"/>
</svg>

<svg class="abs" style="left:964px;top:740px" width="18" height="17" viewBox="964 740 18 17">
<rect x="969" y="744.6" width="10.6" height="10" rx="1" fill="#f7dcb4" stroke="#d8a868" stroke-width="0.6"/>
<path d="M967.4 749.6 L975 749.6 L977.4 754.7 L969.4 754.7 Z" fill="#f0bf72"/>
<path d="M971.6 748.4 L969.8 748.4 A2.6 2.6 0 0 1 969.8 743.4 L972 743.4" fill="none" stroke="#3e84a0" stroke-width="1.7"/>
<path d="M971.6 741.6 L975 744 L971.6 746 Z" fill="#3e84a0"/>
</svg>

<svg class="abs" style="left:990px;top:752px" width="10" height="9" viewBox="0 0 10 9"><g fill="#8e8e8e"><rect x="6.4" y="0.6" width="1.8" height="1.8"/><rect x="3.2" y="3.8" width="1.8" height="1.8"/><rect x="6.4" y="3.8" width="1.8" height="1.8"/></g></svg>

<svg class="abs" style="left:900px;top:0" width="103" height="22" viewBox="900 0 103 22">
<defs>
<linearGradient id="wbG" x1="0" y1="0" x2="0" y2="1"><stop offset="0" stop-color="#e6e8ea"/><stop offset="0.42" stop-color="#d6d8da"/><stop offset="0.44" stop-color="#b4b6ba"/><stop offset="1" stop-color="#cfd1d4"/></linearGradient>
<linearGradient id="wbR" x1="0" y1="0" x2="0" y2="1"><stop offset="0" stop-color="#f0a898"/><stop offset="0.42" stop-color="#e68a74"/><stop offset="0.44" stop-color="#cf3f1c"/><stop offset="0.75" stop-color="#dc5a38"/><stop offset="1" stop-color="#ee9478"/></linearGradient>
<clipPath id="wbC"><path d="M902.5 -2 L1000.5 -2 L1000.5 14 Q1000.5 18.5 996 18.5 L907 18.5 Q902.5 18.5 902.5 14 Z"/></clipPath>
</defs>
<g clip-path="url(#wbC)">
<rect x="902" y="0" width="54" height="19" fill="url(#wbG)"/>
<rect x="956" y="0" width="45" height="19" fill="url(#wbR)"/>
</g>
<path d="M902.5 -2 L902.5 14 Q902.5 18.5 907 18.5 L996 18.5 Q1000.5 18.5 1000.5 14 L1000.5 -2" fill="none" stroke="#474747" stroke-width="1"/>
<path d="M929.5 0 V18 M955.5 0 V18" stroke="#5a5a5a" stroke-width="1"/>
<path d="M903.5 0 L903.5 14 Q903.5 17.5 907 17.5 L928.5 17.5 M930.5 0 V17.5 H954.5 M956.5 0 V17.5 L996 17.5 Q999.5 17.5 999.5 14 V0" fill="none" stroke="#fff" stroke-opacity="0.45" stroke-width="1"/>
<rect x="910.5" y="9.8" width="11" height="3.8" rx="0.6" fill="#fff" stroke="#4a4a4a" stroke-width="0.9"/>
<path d="M937.5 4.4 H948.5 V13.4 H937.5 Z M940.6 7.6 V10.4 H945.4 V7.6 Z" fill="#fff" fill-rule="evenodd" stroke="#4a4a4a" stroke-width="0.9"/>
<path d="M975.4 6 L981.6 12.4 M981.6 6 L975.4 12.4" stroke="#4a3a3a" stroke-width="4.4" stroke-linecap="square"/>
<path d="M975.4 6 L981.6 12.4 M981.6 6 L975.4 12.4" stroke="#fff" stroke-width="2.6" stroke-linecap="square"/>
</svg>

<svg class="abs" style="left:8px;top:4px" width="18" height="18" viewBox="8 4 18 18">
<path d="M9.4 6 L23.6 6.6 Q24.8 6.8 24.8 8 L24.6 16.6 L12.4 20.2 L9.4 18.2 Z" fill="#c4c4e2" stroke="#6c6c88" stroke-width="1"/>
<path d="M9.6 18 L12.6 19.8 L24.4 16.4" fill="none" stroke="#ececfa" stroke-width="1"/>
<rect x="15.2" y="8" width="5.8" height="5.6" fill="#1c2030"/>
<rect x="17" y="8.4" width="2.2" height="2.4" fill="#3e5632"/>
<g fill="#4a4a60"><rect x="10.4" y="8.4" width="1.6" height="1.4"/><rect x="10.8" y="11.4" width="1.6" height="1.4"/><rect x="10.8" y="14.2" width="1.6" height="1.4"/><rect x="14.4" y="16" width="1.8" height="1.4"/><rect x="18" y="15.4" width="1.8" height="1.4"/><rect x="21.4" y="14.6" width="1.8" height="1.4"/></g>
</svg>


<div class="abs" style="left:217px;top:742px;width:525px;height:18px;background:#fff"></div>
<span class="t" id="t52" style="left:10px;top:103.84px;font-size:12px;line-height:15px;color:#f2f2f2;transform:scaleX(0.8859);">Block List</span><span class="t" id="t53" style="left:10px;top:433.84px;font-size:12px;line-height:15px;color:#f2f2f2;transform:scaleX(0.8579);">Block Details</span><span class="t" id="t54" style="left:15px;top:150.34px;font-size:12px;line-height:15px;color:#f2f2f2;transform:scaleX(0.9901);">Name</span><span class="t" id="t55" style="left:264.5px;top:150.34px;font-size:12px;line-height:15px;color:#f2f2f2;transform:scaleX(0.9895);">Value</span><span class="t" id="t56" style="left:15px;top:480.34px;font-size:12px;line-height:15px;color:#f2f2f2;transform:scaleX(0.9901);">Name</span><span class="t" id="t57" style="left:183.5px;top:480.34px;font-size:12px;line-height:15px;color:#f2f2f2;transform:scaleX(0.9895);">Value</span><span class="t" id="t58" style="left:18.3px;top:403.04px;font-size:12px;line-height:15px;color:#f2f2f2;transform:scaleX(0.8509);">Block List</span><span class="t" id="t59" style="left:85px;top:402.54px;font-size:12px;line-height:15px;color:#f2f2f2;transform:scaleX(0.9019);">Header</span><span class="t" id="t60" style="left:145px;top:402.54px;font-size:12px;line-height:15px;color:#f2f2f2;transform:scaleX(0.8871);">Archive Browser</span><span class="t" id="t61" style="left:933px;top:67.34px;font-size:12px;line-height:15px;color:#f2f2f2;transform:scaleX(0.8567);">Block List</span><span class="t" id="t62" style="left:743px;top:741.90px;font-size:13px;line-height:16px;color:#f2f2f2;transform:scaleX(0.9411);">/meshes/Videos/Television/MLPAnal.nif</span>
</body></html>
